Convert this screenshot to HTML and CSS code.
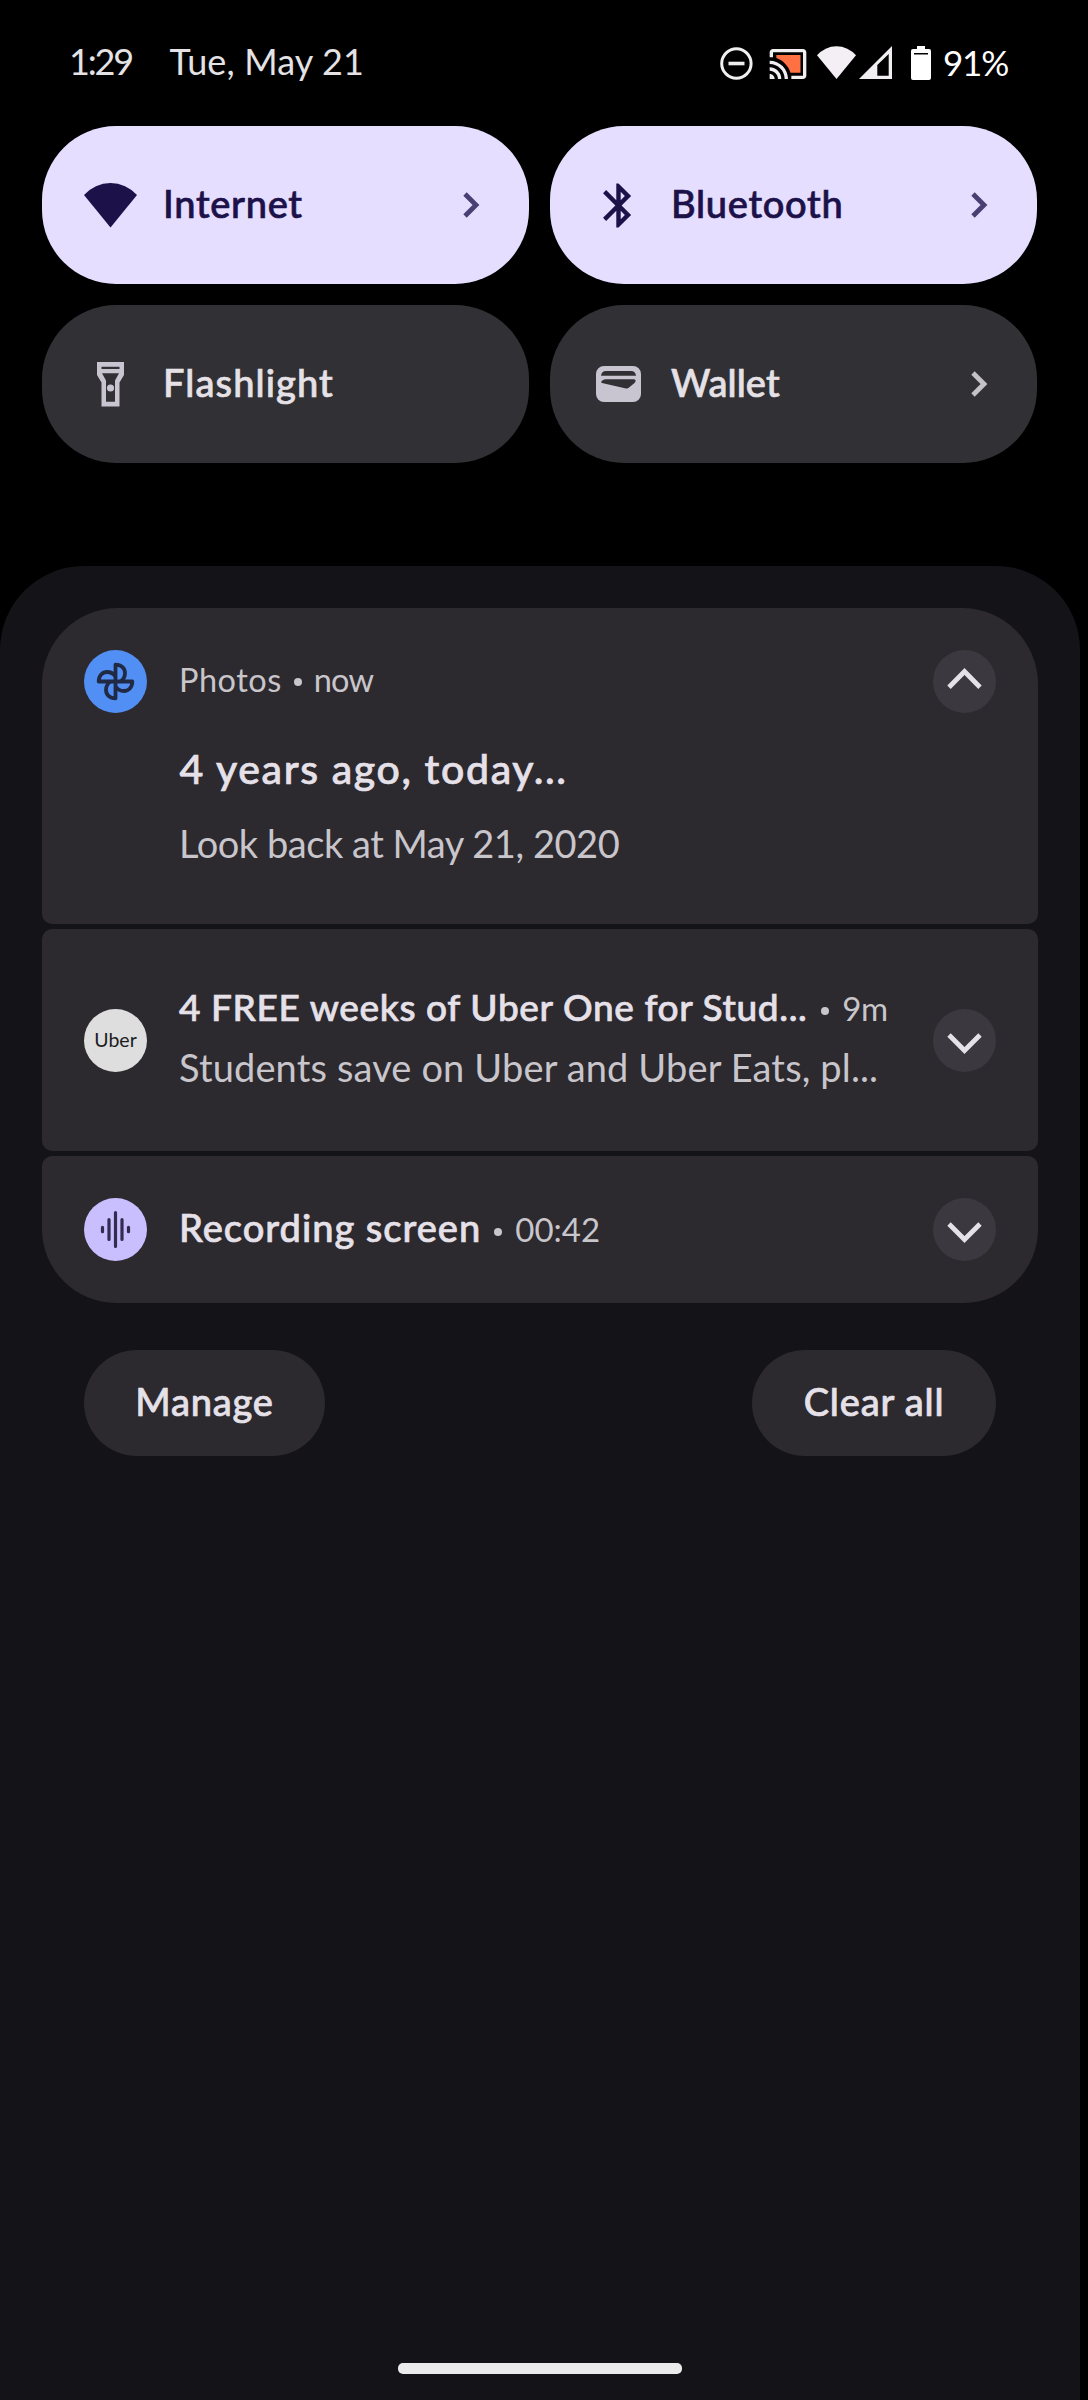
FILE: index.html
```html
<!DOCTYPE html>
<html lang="en">
<head>
<meta charset="utf-8">
<title>Notification shade</title>
<link rel="stylesheet" href="styles.css">
</head>
<body>
<header class="status">
  <span class="clock">1:29</span>
  <span class="date">Tue, May 21</span>
  <div class="indicators">
    <svg class="dnd" width="33" height="33" viewBox="0 0 33 33" fill="none" stroke="#f0eef0"><circle cx="16.4" cy="16.5" r="14.7" stroke-width="3"/><path d="M8.5 16.5h16" stroke-width="3.600"/></svg>
    <svg class="cast" width="40" height="40" viewBox="0 0 24 24"><path fill="#f0eef0" d="M21 3H3c-1.1 0-2 .9-2 2v3h2V5h18v14h-7v2h7c1.1 0 2-.9 2-2V5c0-1.1-.9-2-2-2zM1 18v3h3c0-1.66-1.34-3-3-3zm0-4v2c2.76 0 5 2.24 5 5h2c0-3.87-3.13-7-7-7zm0-4v2c4.97 0 9 4.03 9 9h2c0-6.08-4.93-11-11-11z"/><path fill="#ff7043" d="M19.500 6.6H5v1.8c3.96 1.28 7.3 4.8 8.5 8.8H19.500z"/></svg>
    <svg class="wifi" width="39" height="33" viewBox="0 0 39 33"><path fill="#f3eff4" d="M0 9.3A25.6 25.6 0 0 1 39 9.3L19.5 33z"/></svg>
    <svg class="signal" width="33" height="33" viewBox="0 0 33 33"><path fill="#f0eef0" fill-rule="evenodd" d="M0 33L33 0V33zM18.3 19V29.7H29.7V8z"/></svg>
    <svg class="battery" width="20" height="34" viewBox="0 0 20 34"><path fill="#fff" fill-rule="evenodd" d="M6 0h8v3h4a2 2 0 0 1 2 2v27a2 2 0 0 1-2 2H2a2 2 0 0 1-2-2V5a2 2 0 0 1 2-2h4zM3 7v1.400h14V7z"/></svg>
    <span class="percent">91%</span>
  </div>
</header>

<section class="tiles">
  <div class="tile on">
    <svg class="tile-icon" viewBox="0 0 53 53"><path fill="currentColor" d="M0 16A35.300 35.300 0 0 1 53 16L26.500 48.500z"/></svg>
    <span class="label t-internet">Internet</span>
    <svg class="chev" viewBox="0 0 17 26"><path d="M2 2l11 11L2 24"/></svg>
  </div>
  <div class="tile on">
    <svg class="tile-icon" viewBox="0 0 24 24"><path fill="currentColor" d="M17.710 7.710L12 2h-1v7.590L6.410 5 5 6.410 10.590 12 5 17.590 6.410 19 11 14.410V22h1l5.710-5.710-4.300-4.290 4.300-4.290zM13 5.830l1.880 1.880L13 9.590V5.830zm1.880 10.460L13 18.170v-3.760l1.880 1.880z"/></svg>
    <span class="label t-internet">Bluetooth</span>
    <svg class="chev" viewBox="0 0 17 26"><path d="M2 2l11 11L2 24"/></svg>
  </div>
  <div class="tile">
    <svg class="tile-icon" viewBox="0 0 53 53"><path fill="currentColor" fill-rule="evenodd" d="M13 4H40V17L35.500 24.500V48.500H17.500V24.500L13 17zM17.500 8.700V11H35.500V8.700zM18 15.200L22 22.500V43.800H31V22.500L35 15.200z"/><circle cx="26.500" cy="30" r="3.600" fill="currentColor"/></svg>
    <span class="label t-flash">Flashlight</span>
  </div>
  <div class="tile">
    <svg class="tile-icon" viewBox="0 0 53 53"><path fill="currentColor" fill-rule="evenodd" d="M12 8H41a8 8 0 0 1 8 8V36a8 8 0 0 1-8 8H12a8 8 0 0 1-8-8V16a8 8 0 0 1 8-8zM9 17.800Q9.500 13 14 13H39Q43.500 13 44 17.800zM9 24Q10.500 21.300 13.500 21.300H42Q45 22 42.500 25L37 29.500Q35.500 31 33 30.200L11 25.300Q9 24.700 9 24z"/></svg>
    <span class="label t-wallet">Wallet</span>
    <svg class="chev" viewBox="0 0 17 26"><path d="M2 2l11 11L2 24"/></svg>
  </div>
</section>

<main class="shade">
  <article class="card photos">
    <div class="row">
      <svg class="app" viewBox="-31.500 -31.500 63 63"><circle r="31.500" fill="#528ff5"/><g fill="none" stroke="#202a44" stroke-width="3.800" stroke-linejoin="round">
        <path id="blade" d="M0 0V-16.800C6-16.800 9.500-13 9.500-8.500 9.500-5 8-2 5 0"/><use href="#blade" transform="rotate(90)"/><use href="#blade" transform="rotate(180)"/><use href="#blade" transform="rotate(270)"/></g></svg>
      <p class="meta source"><span class="t-photos">Photos</span><i class="dot"></i><span class="t-now">now</span></p>
      <svg class="toggle" viewBox="0 0 63 63"><circle cx="31.500" cy="31.500" r="31.500"/><path d="M16 37.300L31.500 21.500 47 37.300"/></svg>
    </div>
    <h2 class="headline">4 years ago, today...</h2>
    <p class="body look">Look back at May 21, 2020</p>
  </article>

  <article class="card uber">
    <div class="app uber-logo">Uber</div>
    <div class="text">
      <h2 class="title"><span class="t-free">4 FREE weeks of Uber One for Stud...</span><i class="dot"></i><span class="meta t-9m">9m</span></h2>
      <p class="body students">Students save on Uber and Uber Eats, pl...</p>
    </div>
    <svg class="toggle" viewBox="0 0 63 63"><circle cx="31.500" cy="31.500" r="31.500"/><path d="M16 26L31.500 41.500 47 26"/></svg>
  </article>

  <article class="card recording">
    <svg class="app" viewBox="-31.500 -31.500 63 63"><circle r="31.500" fill="#c9bfff"/><path fill="none" stroke="#332c50" stroke-width="3.200" stroke-linecap="round" d="M-13-2.200V2.200M-6.500-10V10M0-17V17M6.500-10V10M13-2.200V2.200"/></svg>
    <h2 class="title rec-title"><span class="t-rec">Recording screen</span><i class="dot"></i><span class="meta">00:42</span></h2>
    <svg class="toggle" viewBox="0 0 63 63"><circle cx="31.500" cy="31.500" r="31.500"/><path d="M16 26L31.500 41.500 47 26"/></svg>
  </article>

  <footer class="actions">
    <button class="pill manage">Manage</button>
    <button class="pill clear">Clear all</button>
  </footer>
  <div class="home"></div>
</main>
</body>
</html>
```
FILE: styles.css
```css
* { box-sizing: border-box; }
body {
  margin: 0;
  width: 1088px;
  height: 2400px;
  background: #000;
  color: #e6e1e9;
  font-family: Lato, "Open Sans", sans-serif;
  display: flex;
  flex-direction: column;
}
svg { display: block; flex: none; }
h2, p { margin: 0; white-space: nowrap; }

.status {
  height: 126px;
  padding: 36px 80px 0 69px;
  display: flex;
  align-items: flex-start;
  font-size: 36px;
  line-height: 50px;
  color: #e4e2e4;
  white-space: nowrap;
}
.clock { width: 100.5px; letter-spacing: -2.2px; }
.date { letter-spacing: .15px; }
.indicators { margin-left: auto; display: flex; align-items: flex-start; }
.dnd { margin-top: 11px; }
.cast { margin: 8px 0 0 15px; }
.wifi { margin: 10px 0 0 9px; }
.signal { margin: 10px 0 0 3px; }
.battery { margin: 10px 0 0 19px; }
.percent { width: 65px; margin: 2px 0 0 12px; font-size: 35px; line-height: 49px; letter-spacing: -1.2px; color: #fff; }

.tiles {
  display: grid;
  grid-template-columns: 487px 487px;
  grid-auto-rows: 158px;
  gap: 21px;
  padding-left: 42px;
}
.tile {
  display: flex;
  align-items: center;
  padding: 0 49px 0 42px;
  border-radius: 74px;
  background: #313034;
  color: #c8c5d0;
}
.tile.on { background: #e5deff; color: #1c1149; }
.tile-icon { width: 53px; height: 53px; }
.label, .headline, .t-free, .t-rec, .pill { -webkit-text-stroke: .7px currentColor; }
.label {
  margin-left: 26px;
  padding-bottom: 5px;
  font-size: 38px;
  font-weight: 500;
  line-height: 48px;
  color: #e5e1e6;
}
.on .label { color: inherit; }
.t-internet { letter-spacing: .7px; }
.t-flash { letter-spacing: 1.1px; }
.t-wallet { letter-spacing: .1px; }
.chev { width: 17px; height: 26px; margin-left: auto; fill: none; stroke: #c4c2c6; stroke-width: 4.8; }
.on .chev { stroke: #4a3f72; }

.shade {
  flex: 1;
  width: 1080px;
  margin-top: 103px;
  padding: 42px 42px 26px;
  border-radius: 84px 84px 0 0;
  background: #141318;
  display: flex;
  flex-direction: column;
}
.card {
  width: 996px;
  padding: 0 42px;
  border-radius: 10px;
  background: #2c292f;
  display: flex;
  align-items: center;
}
.card + .card { margin-top: 5px; }
.photos {
  height: 316px;
  padding-top: 42px;
  flex-direction: column;
  align-items: stretch;
  border-radius: 76px 76px 10px 10px;
}
.uber { height: 222px; }
.recording { height: 147px; border-radius: 10px 10px 74px 74px; }
.row { display: flex; align-items: center; height: 63px; }
.app { width: 63px; height: 63px; flex: none; margin-right: 32px; }
.toggle { width: 63px; height: 63px; margin-left: auto; }
.toggle circle { fill: #3b383f; }
.toggle path { fill: none; stroke: #e5e1e9; stroke-width: 4.8; }
.meta { font-size: 33px; font-weight: 400; color: #c8c5cb; }
.source { font-size: 32.5px; line-height: 48px; padding-bottom: 4px; color: #c8c5cb; }
.dot {
  display: inline-block;
  width: 8px;
  height: 8px;
  margin: 0 13px;
  border-radius: 50%;
  background: #c8c5cb;
  vertical-align: 6px;
}
.source .dot { margin: 0 12px; }
.t-photos { letter-spacing: .5px; }
.t-now { letter-spacing: -.8px; }
.headline { margin: 32px 0 0 95.5px; font-size: 41px; font-weight: 500; line-height: 48px; letter-spacing: 1.65px; }
.body { font-size: 38px; line-height: 48px; color: #c8c5cb; }
.look { margin: 26px 0 0 95px; letter-spacing: -.46px; }
.text { padding-bottom: 6px; }
.title { font-size: 37px; font-weight: 500; line-height: 48px; }
.t-free { letter-spacing: .63px; }
.uber .dot { margin: 0 13px 0 14px; }
.t-9m { letter-spacing: -.6px; }
.students { margin-top: 11px; letter-spacing: .14px; }
.rec-title { padding-bottom: 3px; font-size: 38px; }
.t-rec { letter-spacing: 1px; }
.uber-logo {
  border-radius: 50%;
  background: #dededf;
  color: #1c1c1e;
  font-size: 19.5px;
  line-height: 62px;
  text-align: center;
}

.actions { display: flex; justify-content: space-between; margin-top: 47px; padding: 0 42px; }
.pill {
  height: 106px;
  padding: 0 0 5px;
  border: 0;
  border-radius: 53px;
  background: #2c292f;
  color: #e6e1e9;
  font: 500 38px/48px Lato, "Open Sans", sans-serif;
}
.manage { width: 241px; letter-spacing: .8px; }
.clear { width: 244px; letter-spacing: .8px; }
.home { width: 284px; height: 11px; margin: auto 0 0 356px; border-radius: 5px; background: #ebebec; }
```
